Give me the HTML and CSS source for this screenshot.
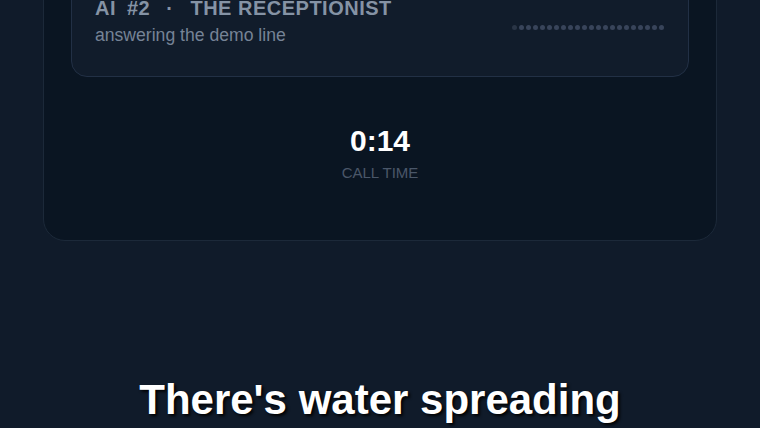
FILE: index.html
```html
<!DOCTYPE html>
<html lang="en">
<head>
<meta charset="UTF-8" />
<meta name="viewport" content="width=device-width, initial-scale=1" />
<title>Call Demo</title>
<link rel="stylesheet" href="styles.css">
</head>
<body>

<div class="stage">
  <div class="call-card">
    <div class="agent-card">
      <div class="agent-info">
        <div class="agent-title">
          <span>AI</span>
          <span>#2</span>
          <span class="sep">·</span>
          <span>THE RECEPTIONIST</span>
        </div>
        <div class="agent-sub">answering the demo line</div>
      </div>
      <div class="wave" id="wave"></div>
    </div>

    <div class="timer">
      <div class="timer-value">0:14</div>
      <div class="timer-label">CALL TIME</div>
    </div>
  </div>
</div>

<div class="caption">There's water spreading</div>

<script>
  const wave = document.getElementById('wave');
  for (let i = 0; i < 22; i++) {
    const dot = document.createElement('span');
    dot.className = 'dot';
    wave.appendChild(dot);
  }
</script>

</body>
</html>
```

FILE: styles.css
```css
/* Base */
* {
  box-sizing: border-box;
}
html, body {
  height: 100%;
}
body {
  margin: 0;
  background: #101b2a;
  font-family: 'Liberation Sans', Arial, sans-serif;
  color: #fff;
  overflow: hidden;
}
.stage {
  padding: 0 43px;
  margin-top: -50px;
}
.call-card {
  background: #0a1522;
  border: 1px solid #1c2939;
  border-radius: 22px;
  padding: 28px 27px 58px;
}
.agent-card {
  background: #111c2b;
  border: 1px solid #223045;
  border-radius: 16px;
  padding: 16px 24px 31px 23px;
  display: flex;
  justify-content: space-between;
  align-items: flex-start;
}
.agent-title {
  display: flex;
  gap: 11px;
  font-size: 20px;
  line-height: 24px;
  font-weight: 700;
  letter-spacing: 0.5px;
  color: #8593a5;
}
.agent-title .sep {
  margin: 0 6px 0 5px;
}
.agent-sub {
  margin-top: 4.5px;
  font-size: 17.6px;
  line-height: 20px;
  color: #768396;
}
.wave {
  display: flex;
  gap: 2px;
  margin-top: 29px;
}
.dot {
  width: 5px;
  height: 5px;
  border-radius: 50%;
  background: #38445a;
}
.dot:first-child {
  background: #2a3546;
}
.timer {
  margin-top: 46px;
  text-align: center;
}
.timer-value {
  font-size: 30px;
  line-height: 36px;
  font-weight: 700;
  color: #fff;
}
.timer-label {
  margin-top: 5px;
  font-size: 15px;
  line-height: 18px;
  color: #4a5769;
}
.caption {
  margin-top: 135px;
  text-align: center;
  font-size: 42px;
  line-height: 48px;
  font-weight: 700;
  color: #fff;
  text-shadow: 2px 2px 3px rgba(0,0,0,0.95);
}
```
